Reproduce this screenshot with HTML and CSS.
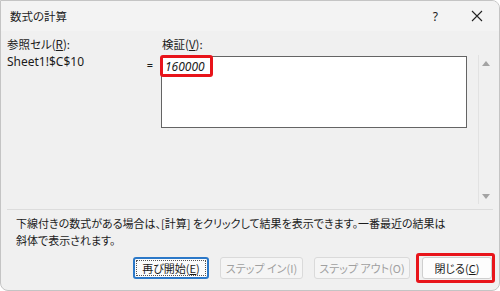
FILE: index.html
```html
<!DOCTYPE html>
<html lang="ja">
<head>
    <meta charset="UTF-8">
    <meta name="viewport" content="width=device-width, initial-scale=1.0">
    <title>数式の計算</title>
    <link rel="stylesheet" href="styles.css">
</head>
<body>
    <div class="window">
        <div class="titlebar">
            <span class="title">数式の計算</span>
            <span class="help">?</span>
            <span class="close">
                <svg width="12" height="12" viewBox="0 0 12 12">
                    <path d="M1 1 L11 11 M11 1 L1 11" stroke="#222" stroke-width="1.1" fill="none"/>
                </svg>
            </span>
        </div>

        <div class="main">
            <div class="label">参照セル(<u>R</u>):</div>
            <div></div>
            <div class="label">検証(<u>V</u>):</div>
            <div></div>

            <div class="ref">Sheet1!$C$10</div>
            <div class="eq">=</div>
            <div class="box">
                <span class="value">160000</span>
                <span class="mark"></span>
            </div>
            <div class="scroll">
                <span class="arrow up"></span>
                <span class="arrow down"></span>
            </div>
        </div>

        <div class="sep"></div>

        <p class="note">下線付きの数式がある場合は、[計算] をクリックして結果を表示できます。一番最近の結果は<br>斜体で表示されます。</p>

        <div class="buttons">
            <button class="btn focus"><span class="focus-ring">再び開始(<u>E</u>)</span></button>
            <button class="btn off">ステップ イン(I)</button>
            <button class="btn off">ステップ アウト(O)</button>
            <span class="mark-btn"><button class="btn close-btn">閉じる(<u>C</u>)</button></span>
        </div>
    </div>
</body>
</html>
```

FILE: styles.css
```css
* {
    box-sizing: border-box;
    margin: 0;
    padding: 0;
}
body {
    background: #fff;
    font-family: "Noto Sans CJK JP", "Noto Sans", sans-serif;
    font-size: 11px;
    color: #1b1b1b;
    font-feature-settings: "palt";
}
.window {
    width: 500px;
    height: 291px;
    background: #f0f0f0;
    border: 1px solid #c4c4c4;
    border-radius: 0 8px 8px 8px;
    overflow: hidden;
}
.titlebar {
    height: 30px;
    display: flex;
    align-items: center;
    background: #f3f3f3;
    padding-left: 9px;
}
.title {
    flex: 1;
    font-size: 11.5px;
}
.help {
    font-family: "Noto Sans", sans-serif;
    font-size: 12px;
    margin-right: 33px;
}
.close {
    display: flex;
    margin-right: 16px;
}
.main {
    display: grid;
    grid-template-columns: 132px 10px 306px 14px;
    grid-template-rows: 20px 148px;
    column-gap: 6px;
    padding: 5px 0 0 6px;
}
.main .label {
    font-size: 11.5px;
    line-height: 16px;
}
.main .label:nth-child(3) {
    margin-left: 1px;
}
.ref {
    font-family: "Noto Sans", sans-serif;
    font-size: 12px;
    line-height: 16px;
    margin-top: -2px;
}
.eq {
    text-align: center;
    line-height: 16px;
    margin-top: 1px;
    font-family: "Noto Sans", sans-serif;
}
.box {
    position: relative;
    height: 72px;
    background: #fff;
    border: 1px solid #646464;
    padding: 1px 3px;
}
.value {
    font-family: "Noto Sans", sans-serif;
    font-style: italic;
    font-size: 12px;
    line-height: 16px;
}
.mark {
    position: absolute;
    left: -2px;
    top: -2px;
    width: 53px;
    height: 22px;
    border: 3px solid #e8141a;
    border-radius: 3px;
}
.scroll {
    margin-left: 5px;
    margin-top: -1px;
    border-left: 1px solid #e2e2e2;
    display: flex;
    flex-direction: column;
    justify-content: space-between;
    align-items: center;
    padding: 6px 0 5px;
    width: 14px;
}
.arrow {
    width: 0;
    height: 0;
    border-left: 4px solid transparent;
    border-right: 4px solid transparent;
}
.arrow.up {
    border-bottom: 5px solid #a3a3a3;
}
.arrow.down {
    border-top: 5px solid #a3a3a3;
}
.sep {
    height: 1px;
    background: #dcdcdc;
    margin: 5px 6px 0;
}
.note {
    padding: 5px 0 0 15px;
    line-height: 17px;
}
.buttons {
    display: flex;
    justify-content: flex-end;
    align-items: center;
    gap: 11px;
    padding: 4px 4px 0 0;
}
.btn {
    font-family: "Noto Sans CJK JP", "Noto Sans", sans-serif;
    font-feature-settings: "palt";
    font-size: 11px;
    height: 22px;
    border: 1px solid #d0d0d0;
    border-radius: 3px;
    background: #fbfbfb;
    color: #1b1b1b;
    padding: 0;
}
.btn.focus {
    width: 76px;
    border: 2px solid #2b78c8;
    padding: 1px;
}
.focus-ring {
    display: block;
    height: 100%;
    border: 1px dotted #555;
    line-height: 14px;
}
.btn.off {
    color: #a0a0a0;
    background: #f5f5f5;
    border-color: #dadada;
}
.btn.off:nth-child(2) {
    width: 83px;
}
.btn.off:nth-child(3) {
    width: 96px;
}
.mark-btn {
    display: flex;
    border: 3px solid #e8141a;
    border-radius: 3px;
    padding: 1px 0 1px 3px;
    margin-left: -5px;
}
.close-btn {
    width: 70px;
    border-color: #cfcfcf;
    background: #fdfdfd;
}
```
